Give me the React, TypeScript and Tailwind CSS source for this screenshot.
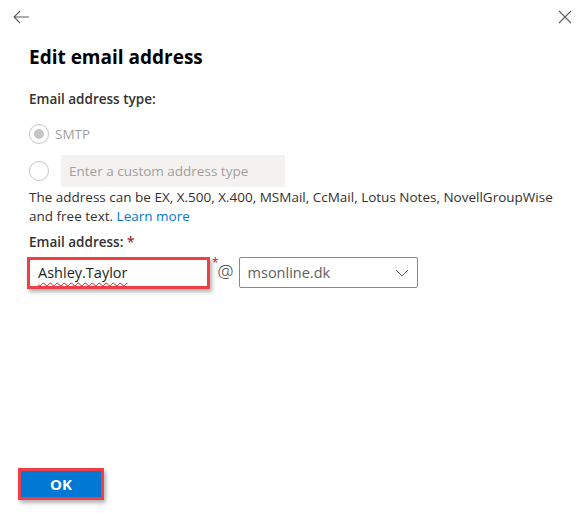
import React from 'react'

const font = { fontFamily: '"Segoe UI", "Open Sans", "Liberation Sans", sans-serif' }

const Radio = ({ checked }: { checked?: boolean }) => (
  <span className="flex h-5 w-5 shrink-0 items-center justify-center rounded-full border border-[#c8c6c4] bg-white">
    {checked && <span className="h-[10px] w-[10px] rounded-full bg-[#c8c6c4]" />}
  </span>
)

export default function App() {
  return (
    <div className="flex h-[513px] w-[586px] flex-col bg-white text-[#323130]" style={font}>
      <div className="flex items-center justify-between px-[13px] pt-[10px]">
        <svg width="16" height="14" viewBox="0 0 16 14" fill="none" stroke="#605e5c" strokeWidth="1.1">
          <path d="M16 7H1M7 1L1 7l6 6" />
        </svg>
        <svg width="14" height="14" viewBox="0 0 14 14" fill="none" stroke="#605e5c" strokeWidth="1.1" className="mr-[1px]">
          <path d="M1 1l12 12M13 1L1 13" />
        </svg>
      </div>

      <div className="flex flex-1 flex-col pl-[29px] pr-[20px]">
        <h1 className="mt-[19px] text-[19px] font-bold leading-[28px] text-black">Edit email address</h1>

        <div className="mt-[18px] text-[13.5px] font-semibold leading-[20px]">Email address type:</div>

        <div className="mt-[15px] flex items-center gap-[6px]">
          <Radio checked />
          <span className="text-[13.5px] text-[#a19f9d]">SMTP</span>
        </div>

        <div className="mt-[11px] flex items-center gap-[12px]">
          <Radio />
          <div className="flex h-[32px] w-[224px] items-center bg-[#f3f2f1] px-[8px] text-[13.5px] text-[#a19f9d]">
            Enter a custom address type
          </div>
        </div>

        <p className="mt-[1px] whitespace-nowrap text-[13.5px] leading-[19px]">
          The address can be EX, X.500, X.400, MSMail, CcMail, Lotus Notes, NovellGroupWise
          <br />
          and free text. <span className="text-[#0078d4]">Learn more</span>
        </p>

        <div className="mt-[6px] text-[13.5px] font-semibold leading-[20px]">
          Email address: <span className="text-[#a4262c]">*</span>
        </div>

        <div className="mt-[5px] flex items-start">
          <div className="-ml-[2px] flex h-[32px] w-[183px] items-center border-[3px] border-[#ee3e46] bg-white pl-[8px] shadow-[2px_3px_4px_rgba(0,0,0,0.3)]">
            <span className="text-[14.5px] leading-none text-[#201f1e] underline decoration-[#e81123] decoration-wavy decoration-1 underline-offset-[4px]">
              Ashley.Taylor
            </span>
          </div>
          <span className="ml-[2px] text-[12px] leading-none text-[#a4262c]">*</span>
          <span className="-ml-[1px] mt-[5px] text-[18px] font-light leading-none text-[#323130]">@</span>
          <div className="ml-[5px] flex h-[31px] w-[179px] items-center justify-between rounded-[2px] border border-[#8a8886] pl-[8px] pr-[8px] text-[14.5px] text-[#605e5c]">
            <span>msonline.dk</span>
            <svg width="14" height="8" viewBox="0 0 14 8" fill="none" stroke="#605e5c" strokeWidth="1">
              <path d="M1 1l6 6 6-6" />
            </svg>
          </div>
        </div>

        <div className="mt-auto mb-[13px] -ml-[11px]">
          <div className="flex h-[32px] w-[86px] items-center justify-center border-[3px] border-[#ee3e46] bg-[#0078d4] shadow-[2px_3px_4px_rgba(0,0,0,0.3)]">
            <span className="text-[15px] font-bold text-white">OK</span>
          </div>
        </div>
      </div>
    </div>
  )
}
